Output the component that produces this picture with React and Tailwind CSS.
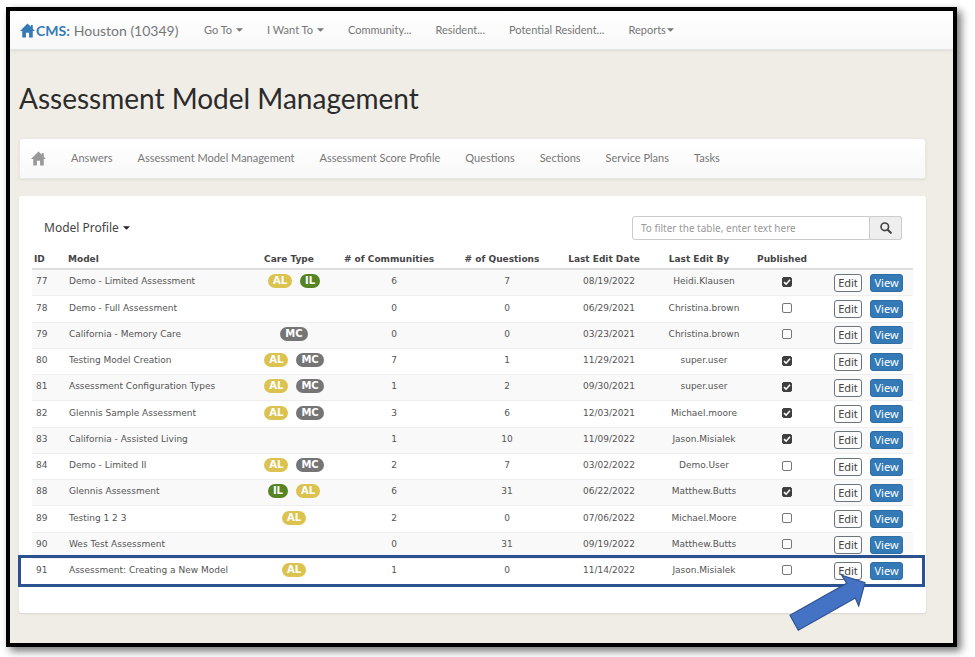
import React, { useState } from 'react';

const models = [
  { id: 77, name: 'Demo - Limited Assessment', care: ['AL', 'IL'], communities: 6, questions: 7, date: '08/19/2022', by: 'Heidi.Klausen', published: true },
  { id: 78, name: 'Demo - Full Assessment', care: [], communities: 0, questions: 0, date: '06/29/2021', by: 'Christina.brown', published: false },
  { id: 79, name: 'California - Memory Care', care: ['MC'], communities: 0, questions: 0, date: '03/23/2021', by: 'Christina.brown', published: false },
  { id: 80, name: 'Testing Model Creation', care: ['AL', 'MC'], communities: 7, questions: 1, date: '11/29/2021', by: 'super.user', published: true },
  { id: 81, name: 'Assessment Configuration Types', care: ['AL', 'MC'], communities: 1, questions: 2, date: '09/30/2021', by: 'super.user', published: true },
  { id: 82, name: 'Glennis Sample Assessment', care: ['AL', 'MC'], communities: 3, questions: 6, date: '12/03/2021', by: 'Michael.moore', published: true },
  { id: 83, name: 'California - Assisted Living', care: [], communities: 1, questions: 10, date: '11/09/2022', by: 'Jason.Misialek', published: true },
  { id: 84, name: 'Demo - Limited II', care: ['AL', 'MC'], communities: 2, questions: 7, date: '03/02/2022', by: 'Demo.User', published: false },
  { id: 88, name: 'Glennis Assessment', care: ['IL', 'AL'], communities: 6, questions: 31, date: '06/22/2022', by: 'Matthew.Butts', published: true },
  { id: 89, name: 'Testing 1 2 3', care: ['AL'], communities: 2, questions: 0, date: '07/06/2022', by: 'Michael.Moore', published: false },
  { id: 90, name: 'Wes Test Assessment', care: [], communities: 0, questions: 31, date: '09/19/2022', by: 'Matthew.Butts', published: false },
  { id: 91, name: 'Assessment: Creating a New Model', care: ['AL'], communities: 1, questions: 0, date: '11/14/2022', by: 'Jason.Misialek', published: false },
];

const careColors = {
  AL: 'bg-[#dcc34f]',
  IL: 'bg-[#568423]',
  MC: 'bg-[#757575]',
};

const sections = ['Answers', 'Assessment Model Management', 'Assessment Score Profile', 'Questions', 'Sections', 'Service Plans', 'Tasks'];

const HomeIcon = ({ className }) => (
  <svg viewBox="0 0 16 16" className={className} fill="currentColor" aria-hidden="true">
    <path d="M8 0.5 L11.5 4 V2 H13.6 V6.1 L16 8.6 H13.6 V15.5 H9.7 V10.3 H6.3 V15.5 H2.4 V8.6 H0 Z" />
  </svg>
);

const Caret = ({ className = '' }) => (
  <svg viewBox="0 0 8 4" className={`h-1 w-[7px] ${className}`} fill="currentColor" aria-hidden="true">
    <path d="M0 0 H8 L4 4 Z" />
  </svg>
);

const SearchIcon = () => (
  <svg viewBox="0 0 14 14" className="h-3 w-3" fill="none" stroke="currentColor" aria-hidden="true">
    <circle cx="5.6" cy="5.6" r="4.4" strokeWidth="1.9" />
    <path d="M9 9 L12.6 12.6" strokeWidth="2.5" strokeLinecap="round" />
  </svg>
);

const Published = ({ model }) => {
  const [checked, setChecked] = useState(model.published);

  return (
    <span className="relative inline-block h-[10px] w-[10px] align-middle">
      <input
        type="checkbox"
        aria-label={`${model.name} published`}
        checked={checked}
        onChange={() => setChecked(!checked)}
        className="block h-[10px] w-[10px] appearance-none rounded-[2px] border border-[#767676] bg-white checked:border-[#3f3f3f] checked:bg-[#3f3f3f]"
      />
      {checked && (
        <svg viewBox="0 0 10 10" className="pointer-events-none absolute inset-0" fill="none" stroke="white" strokeWidth="1.6">
          <path d="M2 5.2 L4.1 7.2 L8 2.8" />
        </svg>
      )}
    </span>
  );
};

const ModelRow = ({ model }) => (
  <tr className="border-t border-[#eeeeee] odd:bg-[#f9f9f9]">
    <td className="pb-[3px] pl-1">{model.id}</td>
    <td className="pb-[3px] pl-px whitespace-nowrap">{model.name}</td>
    <td className="pb-[3px]">
      <div className="flex justify-center gap-2">
        {model.care.map((type) => (
          <span key={type} className={`h-[14px] rounded-full px-[5px] text-[10px] leading-[14px] font-bold text-white ${careColors[type]}`}>
            {type}
          </span>
        ))}
      </div>
    </td>
    <td className="pb-[3px] text-center">{model.communities}</td>
    <td className="pb-[3px] text-center">{model.questions}</td>
    <td className="pb-[3px] text-center">{model.date}</td>
    <td className="pb-[3px] text-center">{model.by}</td>
    <td className="pb-[3px] text-center">
      <Published model={model} />
    </td>
    <td>
      <div className="flex justify-end gap-2 pr-[10px] font-['Noto_Sans',sans-serif] text-[11px] leading-4">
        <button type="button" className="h-[18px] w-7 rounded-[3px] border border-[#6c757d] bg-[#fcfcfc] text-[#444]">Edit</button>
        <button type="button" className="h-[18px] w-[33px] rounded-[3px] border border-[#2e6da4] bg-[#337ab7] text-white">View</button>
      </div>
    </td>
  </tr>
);

const App = () => {
  const [filter, setFilter] = useState('');
  const rows = models.filter((model) => model.name.toLowerCase().includes(filter.toLowerCase()));

  return (
    <div className="bg-white pt-[7px] pr-[18px] pb-[10px] pl-[6px] font-[Lato,sans-serif] text-[11px] text-[#777]">
      <div className="border-4 border-black bg-[#f0ede6] pb-[30px] shadow-[4px_4px_8px_rgba(0,0,0,0.55)]">
        <nav className="flex h-[39px] items-center border-b border-[#e4e4e4] bg-linear-to-b from-white to-[#f8f8f8] pl-[10px] shadow-[0_1px_3px_rgba(0,0,0,0.08)]">
          <a href="#home" className="flex w-[184px] items-center text-[14px] whitespace-nowrap">
            <HomeIcon className="mr-px h-[15px] w-[15px] text-[#337ab7]" />
            <strong className="mr-1 text-[#337ab7]">CMS:</strong>
            Houston (10349)
          </a>
          <div className="flex gap-6 whitespace-nowrap">
            <button type="button" className="flex items-center gap-1">Go To <Caret /></button>
            <button type="button" className="flex items-center gap-1">I Want To <Caret /></button>
            <a href="#community">Community...</a>
            <a href="#resident">Resident...</a>
            <a href="#potential">Potential Resident...</a>
            <button type="button" className="flex items-center gap-px">Reports<Caret /></button>
          </div>
        </nav>

        <main className="pr-[27px] pl-[9px]">
          <h1 className="pt-7 text-[28px] leading-10 text-[#2b2b2b]">Assessment Model Management</h1>

          <nav className="mt-5 flex h-[41px] items-center gap-[25px] rounded-[3px] border border-[#e9e8e4] bg-linear-to-b from-white to-[#f8f8f8] pl-[11px] whitespace-nowrap shadow-[0_1px_3px_rgba(0,0,0,0.08)]">
            <a href="#home" aria-label="Home"><HomeIcon className="h-[15px] w-[15px] text-[#999]" /></a>
            {sections.map((section) => (
              <a key={section} href="#section">{section}</a>
            ))}
          </nav>

          <section className="mt-[17px] rounded-[3px] bg-white pt-5 pr-[13px] pb-[29px] pl-[13px] shadow-[0_1px_2px_rgba(0,0,0,0.1)]">
            <div className="flex items-center justify-between pr-[11px] pl-3 font-['Noto_Sans',sans-serif]">
              <button type="button" className="flex items-center gap-1 text-[12px] text-[#444]">
                Model Profile <Caret className="text-[#222]" />
              </button>
              <form className="flex h-6" onSubmit={(e) => e.preventDefault()}>
                <input
                  type="text"
                  aria-label="Filter the table"
                  value={filter}
                  onChange={(e) => setFilter(e.target.value)}
                  placeholder="To filter the table, enter text here"
                  className="w-[238px] rounded-l-[3px] border border-[#ccc] px-2 text-[10px] text-[#555] placeholder:text-[#999]"
                />
                <button type="submit" aria-label="Search" className="flex w-8 items-center justify-center rounded-r-[3px] border border-l-0 border-[#ccc] bg-[#eee] text-[#444]">
                  <SearchIcon />
                </button>
              </form>
            </div>

            <div className="relative mt-[9px]">
              <table className="h-[335px] w-full table-fixed border-collapse font-['DejaVu_Sans',sans-serif] text-[9px] leading-3 text-[#555]">
                <thead>
                  <tr className="h-5 whitespace-nowrap text-[#444]">
                    <th className="w-9 pl-[2px] text-left">ID</th>
                    <th className="text-left">Model</th>
                    <th className="w-[90px] pr-[10px]">Care Type</th>
                    <th className="w-[110px] pr-[10px]"># of Communities</th>
                    <th className="w-[116px] pr-[10px]"># of Questions</th>
                    <th className="w-[88px] pr-[10px]">Last Edit Date</th>
                    <th className="w-[102px] pr-[10px]">Last Edit By</th>
                    <th className="w-16 pr-[10px]">Published</th>
                    <th className="w-[94px]" aria-label="Actions"></th>
                  </tr>
                </thead>
                <tbody className="border-t-2 border-[#ddd]">
                  {rows.map((model) => (
                    <ModelRow key={model.id} model={model} />
                  ))}
                </tbody>
              </table>

              {/* callout around the newest model */}
              <div className="pointer-events-none absolute -right-3 -bottom-[3px] -left-[14px] h-8 border-[3px] border-[#2a5190]"></div>
              <svg viewBox="0 0 78 58" className="pointer-events-none absolute right-[47px] -bottom-[48px] h-[58px] w-[78px]">
                <path
                  d="M2 41.3 L58.7 9.3 L53.7 1.2 L77 8.7 L70.7 32 L67.3 24 L10.3 56.3 Z"
                  fill="#4472c4"
                  stroke="#2f528f"
                  strokeWidth="1.2"
                />
              </svg>
            </div>
          </section>
        </main>
      </div>
    </div>
  );
};

export default App;
